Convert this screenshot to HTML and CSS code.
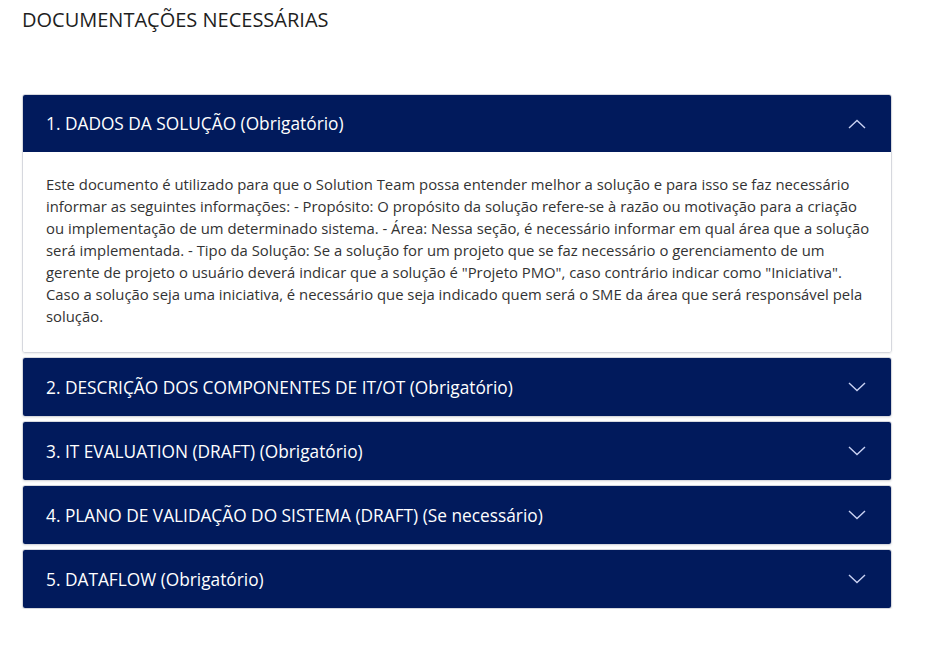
FILE: index.html
```html
<!DOCTYPE html>
<html lang="pt-BR">
<head>
<meta charset="utf-8">
<title>Documentações necessárias</title>
<link rel="stylesheet" href="styles.css">
</head>
<body>
<main class="page">
  <h1 class="title">DOCUMENTAÇÕES NECESSÁRIAS</h1>
  <div class="accordion">
    <section class="item open">
      <div class="head">
        <span>1. DADOS DA SOLUÇÃO (Obrigatório)</span>
        <svg class="chev" viewBox="0 0 18 10" width="18" height="10"><path d="M1 9 L9 1.5 L17 9" fill="none" stroke="currentColor" stroke-width="1.4"/></svg>
      </div>
      <div class="body">Este documento é utilizado para que o Solution Team possa entender melhor a solução e para isso se faz necessário informar as seguintes informações: - Propósito: O propósito da solução refere-se à razão ou motivação para a criação ou implementação de um determinado sistema. - Área: Nessa seção, é necessário informar em qual área que a solução será implementada. - Tipo da Solução: Se a solução for um projeto que se faz necessário o gerenciamento de um gerente de projeto o usuário deverá indicar que a solução é "Projeto PMO", caso contrário indicar como "Iniciativa". Caso a solução seja uma iniciativa, é necessário que seja indicado quem será o SME da área que será responsável pela solução.</div>
    </section>
    <section class="item">
      <div class="head">
        <span>2. DESCRIÇÃO DOS COMPONENTES DE IT/OT (Obrigatório)</span>
        <svg class="chev" viewBox="0 0 18 10" width="18" height="10"><path d="M1 1 L9 8.5 L17 1" fill="none" stroke="currentColor" stroke-width="1.4"/></svg>
      </div>
    </section>
    <section class="item">
      <div class="head">
        <span>3. IT EVALUATION (DRAFT) (Obrigatório)</span>
        <svg class="chev" viewBox="0 0 18 10" width="18" height="10"><path d="M1 1 L9 8.5 L17 1" fill="none" stroke="currentColor" stroke-width="1.4"/></svg>
      </div>
    </section>
    <section class="item">
      <div class="head">
        <span>4. PLANO DE VALIDAÇÃO DO SISTEMA (DRAFT) (Se necessário)</span>
        <svg class="chev" viewBox="0 0 18 10" width="18" height="10"><path d="M1 1 L9 8.5 L17 1" fill="none" stroke="currentColor" stroke-width="1.4"/></svg>
      </div>
    </section>
    <section class="item">
      <div class="head">
        <span>5. DATAFLOW (Obrigatório)</span>
        <svg class="chev" viewBox="0 0 18 10" width="18" height="10"><path d="M1 1 L9 8.5 L17 1" fill="none" stroke="currentColor" stroke-width="1.4"/></svg>
      </div>
    </section>
  </div>
</main>
</body>
</html>
```
FILE: styles.css
```css
html, body {
  margin: 0;
  padding: 0;
  background: #ffffff;
}
body {
  font-family: "Open Sans", "Noto Sans", sans-serif;
  color: #222;
}
.page {
  padding: 7px 35px 0 22px;
}
.title {
  margin: 0;
  font-size: 20px;
  font-weight: 400;
  line-height: 26px;
  color: #1e1e1e;
}
.accordion {
  margin-top: 61px;
  display: flex;
  flex-direction: column;
  gap: 4px;
}
.item {
  border: 1px solid #d6d8de;
  border-radius: 3px;
  overflow: hidden;
  box-shadow: 0 1px 2px rgba(0,0,0,0.08);
}
.head {
  height: 57px;
  background: #011a5c;
  color: #ffffff;
  display: flex;
  align-items: center;
  justify-content: space-between;
  padding: 0 25px 0 23px;
  font-size: 17.3px;
}
.item + .item .head {
  height: 58px;
}
.chev {
  color: #c9d1f2;
}
.body {
  background: #fff;
  padding: 21px 16px 25px 23px;
  font-size: 14.85px;
  line-height: 22px;
  color: #333;
}
```
